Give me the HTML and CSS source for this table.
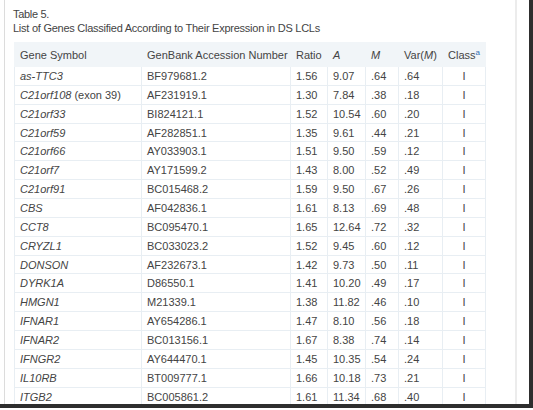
FILE: index.html
```html
<!DOCTYPE html>
<html>
<head>
<meta charset="utf-8">
<link rel="stylesheet" href="styles.css">
</head>
<body>
<div class="shot">
  <div class="page">
    <div class="content">
      <div class="label">Table 5.</div>
      <div class="caption">List of Genes Classified According to Their Expression in DS LCLs</div>
      <table class="genes">
        <colgroup>
          <col class="c1"><col class="c2"><col class="c3"><col class="c4"><col class="c5"><col class="c6"><col class="c7">
        </colgroup>
        <thead>
          <tr>
            <th>Gene Symbol</th>
            <th>GenBank Accession Number</th>
            <th>Ratio</th>
            <th><i>A</i></th>
            <th><i>M</i></th>
            <th>Var(<i>M</i>)</th>
            <th class="cls">Class<sup class="fn">a</sup></th>
          </tr>
        </thead>
        <tbody>
          <tr><td><i>as-TTC3</i></td><td>BF979681.2</td><td>1.56</td><td>9.07</td><td>.64</td><td>.64</td><td class="cls">I</td></tr>
          <tr><td><i>C21orf108</i> (exon 39)</td><td>AF231919.1</td><td>1.30</td><td>7.84</td><td>.38</td><td>.18</td><td class="cls">I</td></tr>
          <tr><td><i>C21orf33</i></td><td>BI824121.1</td><td>1.52</td><td>10.54</td><td>.60</td><td>.20</td><td class="cls">I</td></tr>
          <tr><td><i>C21orf59</i></td><td>AF282851.1</td><td>1.35</td><td>9.61</td><td>.44</td><td>.21</td><td class="cls">I</td></tr>
          <tr><td><i>C21orf66</i></td><td>AY033903.1</td><td>1.51</td><td>9.50</td><td>.59</td><td>.12</td><td class="cls">I</td></tr>
          <tr><td><i>C21orf7</i></td><td>AY171599.2</td><td>1.43</td><td>8.00</td><td>.52</td><td>.49</td><td class="cls">I</td></tr>
          <tr><td><i>C21orf91</i></td><td>BC015468.2</td><td>1.59</td><td>9.50</td><td>.67</td><td>.26</td><td class="cls">I</td></tr>
          <tr><td><i>CBS</i></td><td>AF042836.1</td><td>1.61</td><td>8.13</td><td>.69</td><td>.48</td><td class="cls">I</td></tr>
          <tr><td><i>CCT8</i></td><td>BC095470.1</td><td>1.65</td><td>12.64</td><td>.72</td><td>.32</td><td class="cls">I</td></tr>
          <tr><td><i>CRYZL1</i></td><td>BC033023.2</td><td>1.52</td><td>9.45</td><td>.60</td><td>.12</td><td class="cls">I</td></tr>
          <tr><td><i>DONSON</i></td><td>AF232673.1</td><td>1.42</td><td>9.73</td><td>.50</td><td>.11</td><td class="cls">I</td></tr>
          <tr><td><i>DYRK1A</i></td><td>D86550.1</td><td>1.41</td><td>10.20</td><td>.49</td><td>.17</td><td class="cls">I</td></tr>
          <tr><td><i>HMGN1</i></td><td>M21339.1</td><td>1.38</td><td>11.82</td><td>.46</td><td>.10</td><td class="cls">I</td></tr>
          <tr><td><i>IFNAR1</i></td><td>AY654286.1</td><td>1.47</td><td>8.10</td><td>.56</td><td>.18</td><td class="cls">I</td></tr>
          <tr><td><i>IFNAR2</i></td><td>BC013156.1</td><td>1.67</td><td>8.38</td><td>.74</td><td>.14</td><td class="cls">I</td></tr>
          <tr><td><i>IFNGR2</i></td><td>AY644470.1</td><td>1.45</td><td>10.35</td><td>.54</td><td>.24</td><td class="cls">I</td></tr>
          <tr><td><i>IL10RB</i></td><td>BT009777.1</td><td>1.66</td><td>10.18</td><td>.73</td><td>.21</td><td class="cls">I</td></tr>
          <tr><td><i>ITGB2</i></td><td>BC005861.2</td><td>1.61</td><td>11.34</td><td>.68</td><td>.40</td><td class="cls">I</td></tr>
        </tbody>
      </table>
    </div>
  </div>
</div>
</body>
</html>
```

FILE: styles.css
```css
html, body {
  margin: 0;
  padding: 0;
  background: #ffffff;
}
.shot {
  width: 529px;
  height: 404px;
  border-right: 4px solid #2e2e2e;
  border-bottom: 4px solid #2e2e2e;
  overflow: hidden;
  background: #ffffff;
}
.page {
  margin-left: 4px;
  width: 510px;
  height: 404px;
  border-left: 1px solid #dcdcdc;
  border-right: 2px solid #ececec;
  overflow: hidden;
}
.content {
  padding: 7px 0 0 8px;
  font-family: "Liberation Sans", Arial, sans-serif;
  color: #444444;
}
.label {
  font-size: 11px;
  line-height: 14px;
  letter-spacing: -0.3px;
}
.caption {
  font-size: 11px;
  line-height: 14px;
  letter-spacing: -0.25px;
}
.genes {
  margin-top: 7px;
  margin-left: 1px;
  border-collapse: collapse;
  table-layout: fixed;
  width: 471px;
  font-size: 11px;
  color: #444444;
}
.c1 { width: 127px; }
.c2 { width: 149px; }
.c3 { width: 37px; }
.c4 { width: 38px; }
.c5 { width: 33px; }
.c6 { width: 44px; }
.c7 { width: 43px; }
.genes th {
  background: #f1f5f8;
  font-weight: normal;
  text-align: left;
  padding: 0 5px;
  height: 23px;
  border: 1px solid #f1f5f8;
  white-space: nowrap;
}
.genes td {
  height: 17.86px;
  padding: 0 5px;
  border: 1px solid #e8eef3;
  white-space: nowrap;
  line-height: 14px;
}
.genes .cls {
  text-align: center;
}
.fn {
  color: #3470b5;
  font-size: 8px;
  vertical-align: 4px;
  line-height: 0;
}
```
